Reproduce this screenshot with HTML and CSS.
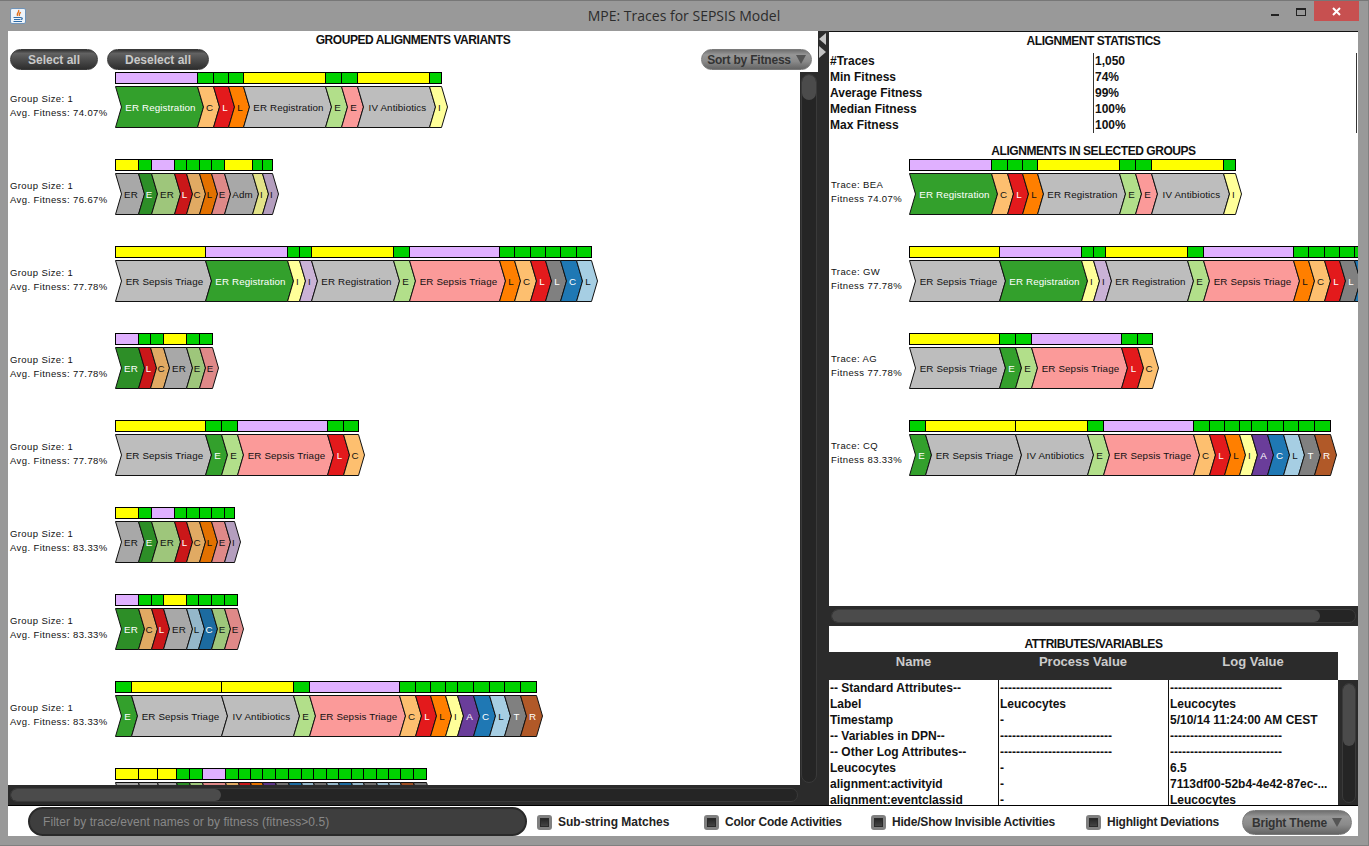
FILE: index.html
```html
<!DOCTYPE html>
<html lang="en">

<head>
  <meta charset="UTF-8">
  <title>MPE: Traces for SEPSIS Model</title>
  <link rel="stylesheet" href="styles.css">
</head>

<body>
  <div class="window">
    <div class="titlebar">
      <div class="titlebar-left">
        <svg class="app-icon" width="16" height="16" viewBox="0 0 16 16">
          <rect x="0.5" y="0.5" width="15" height="15" rx="1.5" fill="#eef4fa" stroke="#6f93b8" />
          <path d="M8.5 2 C10 4 6 5 7.5 8 M10.5 4 C10 5.5 8.5 6 9.5 8" fill="none" stroke="#e2711d" stroke-width="1.4" />
          <path d="M3.5 9.5 H10.5 M4 11.5 H10 M3.5 13.5 H12 M10.5 9.5 C13 9.5 13 11.5 10.5 11.5" fill="none" stroke="#2f6ca8" stroke-width="1.1" />
        </svg>
      </div>
      <div class="window-title">MPE: Traces for SEPSIS Model</div>
      <div class="win-controls">
        <div class="win-btn">
          <svg width="26" height="20" viewBox="0 0 26 20"><rect x="9" y="13" width="8" height="2" fill="#222" /></svg>
        </div>
        <div class="win-btn">
          <svg width="26" height="20" viewBox="0 0 26 20">
            <rect x="8.5" y="7.5" width="9" height="7" fill="none" stroke="#222" />
            <rect x="8" y="7" width="10" height="2" fill="#222" />
          </svg>
        </div>
        <div class="win-close">
          <svg width="45" height="20" viewBox="0 0 45 20">
            <path d="M19 7 L26 14 M26 7 L19 14" stroke="#fff" stroke-width="2" />
          </svg>
        </div>
      </div>
    </div>

    <div class="content">
      <div class="split">
        <div class="left-pane">
          <div class="left-head">
            <div class="panel-title">GROUPED ALIGNMENTS VARIANTS</div>
            <div class="head-buttons">
              <button class="btn-dark btn-select">Select all</button>
              <button class="btn-dark btn-deselect">Deselect all</button>
              <button class="btn-grey btn-sort">Sort by Fitness <span class="arrow"></span></button>
            </div>
          </div>
          <div class="left-body">
            <div class="variants" id="variants"></div>
            <div class="scroll-v">
              <div class="channel-v"><div class="thumb thumb-variants-v"></div></div>
            </div>
          </div>
          <div class="scroll-h scroll-variants">
            <div class="channel-h"><div class="thumb thumb-variants-h"></div></div>
          </div>
        </div>

        <div class="divider">
          <span class="tri tri-left"></span>
          <span class="tri tri-right"></span>
        </div>

        <div class="right-pane">
          <div class="right-top">
            <div class="panel-title stats-title">ALIGNMENT STATISTICS</div>
            <div class="stats">
              <div>#Traces</div><div>1,050</div>
              <div>Min Fitness</div><div>74%</div>
              <div>Average Fitness</div><div>99%</div>
              <div>Median Fitness</div><div>100%</div>
              <div>Max Fitness</div><div>100%</div>
            </div>
            <div class="panel-title selected-title">ALIGNMENTS IN SELECTED GROUPS</div>
            <div class="traces" id="traces"></div>
          </div>
          <div class="scroll-h">
            <div class="channel-h"><div class="thumb thumb-traces-h"></div></div>
          </div>
          <div class="attributes">
            <div class="panel-title attr-title">ATTRIBUTES/VARIABLES</div>
            <div class="attr-head">
              <div>Name</div>
              <div>Process Value</div>
              <div>Log Value</div>
            </div>
            <div class="attr-body">
              <div class="attr-table">
                <div>-- Standard Attributes--</div><div>----------------------------</div><div>----------------------------</div>
                <div>Label</div><div>Leucocytes</div><div>Leucocytes</div>
                <div>Timestamp</div><div>-</div><div>5/10/14 11:24:00 AM CEST</div>
                <div>-- Variables in DPN--</div><div>----------------------------</div><div>----------------------------</div>
                <div>-- Other Log Attributes--</div><div>----------------------------</div><div>----------------------------</div>
                <div>Leucocytes</div><div>-</div><div>6.5</div>
                <div>alignment:activityid</div><div>-</div><div>7113df00-52b4-4e42-87ec-...</div>
                <div>alignment:eventclassid</div><div>-</div><div>Leucocytes</div>
              </div>
              <div class="scroll-v scroll-attr">
                <div class="channel-v"><div class="thumb thumb-attr-v"></div></div>
              </div>
            </div>
          </div>
        </div>
      </div>

      <div class="toolbar">
        <div class="filter-cell">
          <input class="filter" type="text" placeholder="Filter by trace/event names or by fitness (fitness>0.5)">
        </div>
        <label class="check check-wide"><span class="box"></span>Sub-string Matches</label>
        <label class="check"><span class="box"></span>Color Code Activities</label>
        <label class="check"><span class="box"></span>Hide/Show Invisible Activities</label>
        <label class="check"><span class="box"></span>Highlight Deviations</label>
        <button class="btn-grey btn-theme">Bright Theme <span class="arrow"></span></button>
      </div>
    </div>
  </div>

  <script src="script.js"></script>
</body>

</html>
```

FILE: styles.css
```css
html,
body {
  padding: 0;
  margin: 0;
  overflow: hidden;
  font-family: "Liberation Sans", Arial, sans-serif;
}

.window {
  display: flex;
  flex-direction: column;
  width: 100vw;
  height: 100vh;
  box-sizing: border-box;
  background-color: #999;
  border-top: 1px solid #777;
  border-right: 1px solid #808080;
  border-bottom: 1px solid #808080;
}

/* title bar */
.titlebar {
  display: grid;
  grid-template-columns: 1fr auto 1fr;
  height: 30px;
  flex: none;
}

.titlebar-left {
  padding: 7px 0 0 10px;
}

.app-icon {
  display: block;
}

.window-title {
  font-family: "Open Sans", sans-serif;
  font-size: 14px;
  line-height: 30px;
  color: #2c2c2c;
}

.win-controls {
  display: flex;
  justify-content: flex-end;
  align-items: flex-start;
  padding-right: 9px;
}

.win-btn {
  width: 26px;
  height: 20px;
}

.win-close {
  width: 45px;
  height: 20px;
  background-color: #c75050;
}

.win-btn svg,
.win-close svg {
  display: block;
}

/* main area */
.content {
  display: flex;
  flex-direction: column;
  width: 1350px;
  height: 805px;
  margin-left: 8px;
  background-color: #fff;
}

.split {
  display: flex;
  height: 774px;
  flex: none;
  border-bottom: 1px solid #000;
}

.left-pane {
  display: flex;
  flex-direction: column;
  width: 810px;
  flex: none;
}

.left-head {
  height: 41px;
  flex: none;
}

.panel-title {
  font-size: 12px;
  font-weight: bold;
  line-height: 18px;
  letter-spacing: -0.45px;
  text-align: center;
  color: #111;
}

.head-buttons {
  display: flex;
  align-items: flex-start;
  gap: 9px;
  padding-left: 2px;
}

button {
  padding: 0;
  height: 21px;
  border-radius: 11px;
  font-family: inherit;
  font-size: 12px;
  font-weight: bold;
  box-sizing: border-box;
}

.btn-dark {
  color: #c9c9c9;
  border: 1px solid #3a3a3a;
  background: linear-gradient(#333 0, #626262 18%, #4a4a4a 55%, #2e2e2e 100%);
}

.btn-select {
  width: 88px;
}

.btn-deselect {
  width: 102px;
}

.btn-grey {
  display: flex;
  align-items: center;
  justify-content: center;
  gap: 4px;
  color: #333;
  letter-spacing: -0.2px;
  border: 1px solid #7a7a7a;
  background: linear-gradient(#707070 0, #969696 25%, #8a8a8a 60%, #646464 100%);
}

.btn-sort {
  width: 111px;
  margin-left: auto;
  margin-right: 6px;
}

.btn-theme {
  width: 110px;
  height: 25px;
  border-radius: 13px;
  margin-top: 3px;
}

.arrow {
  width: 0;
  height: 0;
  margin-left: 1px;
  border-left: 5px solid transparent;
  border-right: 5px solid transparent;
  border-top: 9px solid #555;
}

.left-body {
  display: flex;
  flex: 1;
  min-height: 0;
}

.variants {
  display: flex;
  flex-direction: column;
  gap: 31px;
  width: 792px;
  flex: none;
  overflow: hidden;
}

/* trace rows */
.trace-row {
  display: flex;
  flex: none;
  padding-left: 2px;
}

.trace-info {
  display: flex;
  flex-direction: column;
  justify-content: center;
  align-self: flex-end;
  flex: none;
  font-size: 9.5px;
  line-height: 14px;
  letter-spacing: 0.4px;
  color: #111;
  white-space: nowrap;
}

.variants .trace-info {
  width: 105px;
  height: 40px;
  padding-bottom: 2px;
}

.traces .trace-info {
  width: 78px;
  height: 38px;
  padding-bottom: 4px;
}

.trace-main {
  flex: none;
}

.bar {
  display: flex;
  width: fit-content;
  height: 12px;
  box-sizing: border-box;
  margin-bottom: 2px;
  border-top: 1px solid #000;
  border-bottom: 1px solid #000;
  border-right: 1px solid #000;
}

.bar-cell {
  box-sizing: border-box;
  border-left: 1px solid #000;
  flex: none;
}

.cell-m {
  background-color: #e0b0ff;
}

.cell-n {
  background-color: #00d200;
}

.cell-y {
  background-color: #ffff00;
}

.chain {
  display: block;
  overflow: visible;
}

.chain polygon {
  stroke: #111;
  stroke-width: 1;
}

.chain-dim polygon {
  filter: brightness(0.89);
}

.chain text {
  font-family: "Liberation Sans", Arial, sans-serif;
  font-size: 9.8px;
  letter-spacing: 0.12px;
  text-anchor: middle;
  fill: #111;
}

.chain text.on-dark {
  fill: #fff;
}

/* scrollbars */
.scroll-v {
  width: 18px;
  flex: none;
  box-sizing: border-box;
  padding: 2px 1px;
  background-color: #2b2b2b;
}

.channel-v {
  height: 100%;
  border-radius: 8px;
  box-sizing: border-box;
  border: 1px solid #3a3a3a;
  background-color: #252525;
}

.scroll-h {
  height: 20px;
  flex: none;
  box-sizing: border-box;
  padding: 3px 2px;
  background-color: #2b2b2b;
}

.scroll-variants {
  padding-right: 20px;
}

.channel-h {
  height: 100%;
  border-radius: 8px;
  box-sizing: border-box;
  border: 1px solid #3a3a3a;
  background-color: #252525;
}

.thumb {
  border-radius: 8px;
  background-color: #4b4b4b;
}

.thumb-variants-v {
  height: 25px;
}

.thumb-variants-h {
  width: 210px;
  height: 100%;
}

.thumb-traces-h {
  width: 488px;
  height: 100%;
}

.thumb-attr-v {
  height: 62px;
}

.divider {
  display: flex;
  flex-direction: column;
  gap: 1px;
  width: 11px;
  flex: none;
  box-sizing: border-box;
  padding: 2px 0 0 1px;
  background-color: #2b2b2b;
}

.tri {
  width: 0;
  height: 0;
  border-top: 6px solid transparent;
  border-bottom: 6px solid transparent;
}

.tri-left {
  border-right: 7px solid #c4c4c4;
}

.tri-right {
  border-left: 7px solid #c4c4c4;
}

/* right side */
.right-pane {
  display: flex;
  flex-direction: column;
  flex: 1;
  min-width: 0;
}

.right-top {
  flex: 1;
  min-height: 0;
  overflow: hidden;
  border-top: 1px solid #111;
}

.stats-title {
  margin-bottom: 3px;
}

.stats {
  display: grid;
  grid-template-columns: 264px 264px;
  font-size: 12px;
  font-weight: bold;
  line-height: 16px;
  color: #111;
}

.stats div {
  padding-left: 1px;
  white-space: nowrap;
}

.stats div:nth-child(even) {
  border-left: 1px solid #333;
  border-right: 1px solid #333;
}

.selected-title {
  line-height: 15px;
  margin-top: 11px;
}

.traces {
  display: flex;
  flex-direction: column;
  gap: 31px;
}

.attributes {
  display: flex;
  flex-direction: column;
  height: 179px;
  flex: none;
  overflow: hidden;
}

.attr-title {
  padding-top: 10px;
  line-height: 16px;
}

.attr-head {
  display: grid;
  grid-template-columns: 169px 170px 170px;
  width: 509px;
  height: 28px;
  flex: none;
  box-sizing: border-box;
  padding-top: 1px;
  background-color: #2b2b2b;
  color: #ccc;
  font-size: 13px;
  font-weight: bold;
  line-height: 18px;
  text-align: center;
}

.attr-body {
  display: flex;
  flex: 1;
  min-height: 0;
}

.attr-table {
  display: grid;
  grid-template-columns: 169px 170px 170px;
  grid-auto-rows: 16px;
  width: 509px;
  flex: none;
  font-size: 12px;
  font-weight: bold;
  line-height: 16px;
  color: #111;
}

.attr-table div {
  padding-left: 1px;
  box-sizing: border-box;
  overflow: hidden;
  white-space: nowrap;
}

.attr-table div:not(:nth-child(3n+1)) {
  border-left: 1px solid #111;
}

.scroll-attr {
  width: 20px;
  padding: 3px 2px 2px 4px;
}

/* bottom toolbar */
.toolbar {
  display: grid;
  grid-template-columns: 509px 167px 167px 215px 156px 110px;
  align-items: center;
  height: 30px;
  flex: none;
  padding-left: 20px;
}

.filter {
  display: block;
  width: 499px;
  height: 29px;
  box-sizing: border-box;
  padding: 1px 13px 0;
  border: 2px solid #2a2a2a;
  border-radius: 15px;
  background-color: #3e3e3e;
  color: #888;
  font-family: inherit;
  font-size: 12px;
  letter-spacing: 0.07px;
  outline: none;
}

.filter::placeholder {
  color: #888;
  opacity: 1;
}

.check {
  display: flex;
  align-items: center;
  gap: 6px;
  margin-top: 2px;
  font-size: 12px;
  font-weight: bold;
  letter-spacing: -0.2px;
  color: #222;
  white-space: nowrap;
}

.check-wide {
  letter-spacing: 0;
}

.box {
  width: 15px;
  height: 15px;
  flex: none;
  box-sizing: border-box;
  border: 3px solid #808080;
  border-radius: 3px;
  background: linear-gradient(#222, #484848);
  box-shadow: inset 0 0 0 1px #2a2a2a;
}
```

FILE: script.js
```js
// activity colours, the ones with a dark fill get white text
const COLOURS = {
  g: '#33a02c', s: '#bdbdbd', c: '#fdbf6f', r: '#e31a1c', o: '#ff7f00',
  l: '#b2df8a', p: '#fb9a99', y: '#ffff99', v: '#cab2d6', u: '#6a3d9a',
  b: '#1f78b4', k: '#a6cee3', d: '#808080', w: '#b15928'
};
const ON_DARK = 'grubdw';

const REG = 'ER Registration';
const TRI = 'ER Sepsis Triage';
const IVA = 'IV Antibiotics';

// [label, colour, move type, width] - move type m = model only, n = sync, y = log only
const SEQ_1 = [[REG, 'g', 'm', 82], ['C', 'c', 'n', 16], ['L', 'r', 'n', 15], ['L', 'o', 'n', 15], [REG, 's', 'y', 82], ['E', 'l', 'n', 16], ['E', 'p', 'n', 16], [IVA, 's', 'y', 72], ['I', 'y', 'n', 12]];
const SEQ_3 = [[TRI, 's', 'y', 90], [REG, 'g', 'm', 82], ['I', 'y', 'n', 12], ['I', 'v', 'n', 12], [REG, 's', 'y', 82], ['E', 'l', 'n', 16], [TRI, 'p', 'm', 90], ['L', 'o', 'n', 15], ['C', 'c', 'n', 16], ['L', 'r', 'n', 15], ['L', 'd', 'n', 15], ['C', 'b', 'n', 16], ['L', 'k', 'n', 15]];
const SEQ_5 = [[TRI, 's', 'y', 90], ['E', 'g', 'n', 16], ['E', 'l', 'n', 16], [TRI, 'p', 'm', 90], ['L', 'r', 'n', 16], ['C', 'c', 'n', 15]];
const SEQ_8 = [['E', 'g', 'n', 16], [TRI, 's', 'y', 90], [IVA, 's', 'y', 72], ['E', 'l', 'n', 16], [TRI, 'p', 'm', 90], ['C', 'c', 'n', 16], ['L', 'r', 'n', 15], ['L', 'o', 'n', 15], ['I', 'y', 'n', 12], ['A', 'u', 'n', 16], ['C', 'b', 'n', 16], ['L', 'k', 'n', 15], ['T', 'd', 'n', 16], ['R', 'w', 'n', 16]];

const VARIANTS = [
  { lines: ['Group Size: 1', 'Avg. Fitness: 74.07%'], seq: SEQ_1 },
  { lines: ['Group Size: 1', 'Avg. Fitness: 76.67%'], dim: true, seq: [['ER', 's', 'y', 23], ['E', 'g', 'n', 13], ['ER', 'l', 'm', 23], ['L', 'r', 'n', 12], ['C', 'c', 'n', 13], ['L', 'o', 'n', 12], ['E', 'p', 'n', 13], ['Adm', 's', 'y', 28], ['I', 'y', 'n', 10], ['I', 'v', 'n', 10]] },
  { lines: ['Group Size: 1', 'Avg. Fitness: 77.78%'], seq: SEQ_3 },
  { lines: ['Group Size: 1', 'Avg. Fitness: 77.78%'], dim: true, seq: [['ER', 'g', 'm', 23], ['L', 'r', 'n', 12], ['C', 'c', 'n', 13], ['ER', 's', 'y', 23], ['E', 'l', 'n', 13], ['E', 'p', 'n', 13]] },
  { lines: ['Group Size: 1', 'Avg. Fitness: 77.78%'], seq: SEQ_5 },
  { lines: ['Group Size: 1', 'Avg. Fitness: 83.33%'], dim: true, seq: [['ER', 's', 'y', 23], ['E', 'g', 'n', 13], ['ER', 'l', 'm', 23], ['L', 'r', 'n', 12], ['C', 'c', 'n', 13], ['L', 'o', 'n', 12], ['E', 'p', 'n', 13], ['I', 'v', 'n', 10]] },
  { lines: ['Group Size: 1', 'Avg. Fitness: 83.33%'], dim: true, seq: [['ER', 'g', 'm', 23], ['C', 'c', 'n', 13], ['L', 'r', 'n', 12], ['ER', 's', 'y', 23], ['L', 'k', 'n', 12], ['C', 'b', 'n', 13], ['E', 'l', 'n', 13], ['E', 'p', 'n', 13]] },
  { lines: ['Group Size: 1', 'Avg. Fitness: 83.33%'], seq: SEQ_8 },
  // scrolled under the bottom edge, only the top of it shows
  { lines: [], dim: true, seq: [['', 's', 'y', 23], ['', 's', 'y', 19], ['', 's', 'y', 19], ['', 'g', 'n', 13], ['', 'l', 'n', 13], ['', 'p', 'm', 23], ['', 'c', 'n', 13], ['', 'r', 'n', 12], ['', 'o', 'n', 12], ['', 'u', 'n', 13], ['', 'd', 'n', 13], ['', 'b', 'n', 13], ['', 'k', 'n', 12], ['', 'd', 'n', 13], ['', 'k', 'n', 12], ['', 'b', 'n', 13], ['', 'k', 'n', 12], ['', 'd', 'n', 13], ['', 'k', 'n', 12], ['', 'k', 'n', 12], ['', 'w', 'n', 13], ['', 'd', 'n', 13]] }
];

const TRACES = [
  { lines: ['Trace: BEA', 'Fitness 74.07%'], seq: SEQ_1 },
  { lines: ['Trace: GW', 'Fitness 77.78%'], seq: SEQ_3 },
  { lines: ['Trace: AG', 'Fitness 77.78%'], seq: SEQ_5 },
  { lines: ['Trace: CQ', 'Fitness 83.33%'], seq: SEQ_8 }
];

const NOTCH = 6;
const SVG_NS = 'http://www.w3.org/2000/svg';

function buildBar(seq) {
  const bar = document.createElement('div');
  bar.className = 'bar';
  seq.forEach(step => {
    const cell = document.createElement('div');
    cell.className = 'bar-cell cell-' + step[2];
    cell.style.width = step[3] + 'px';
    bar.appendChild(cell);
  });
  return bar;
}

function buildChain(seq, dim) {
  const total = seq.reduce((sum, step) => sum + step[3], 0);
  const svg = document.createElementNS(SVG_NS, 'svg');
  svg.setAttribute('class', dim ? 'chain chain-dim' : 'chain');
  svg.setAttribute('width', total + NOTCH + 1);
  svg.setAttribute('height', 42);

  let x = 0.5;
  seq.forEach(step => {
    const w = step[3];
    const poly = document.createElementNS(SVG_NS, 'polygon');
    poly.setAttribute('points', [
      x + ',0.5', (x + w) + ',0.5', (x + w + NOTCH) + ',21',
      (x + w) + ',41.5', x + ',41.5', (x + NOTCH) + ',21'
    ].join(' '));
    poly.setAttribute('fill', COLOURS[step[1]]);
    svg.appendChild(poly);

    if (step[0]) {
      const label = document.createElementNS(SVG_NS, 'text');
      label.setAttribute('x', x + w / 2 + 4);
      label.setAttribute('y', 24.5);
      if (ON_DARK.includes(step[1])) {
        label.setAttribute('class', 'on-dark');
      }
      label.textContent = step[0];
      svg.appendChild(label);
    }

    x += w;
  });
  return svg;
}

function buildRow(item) {
  const row = document.createElement('div');
  row.className = 'trace-row';

  const info = document.createElement('div');
  info.className = 'trace-info';
  item.lines.forEach(line => {
    const div = document.createElement('div');
    div.textContent = line;
    info.appendChild(div);
  });
  row.appendChild(info);

  const main = document.createElement('div');
  main.className = 'trace-main';
  main.appendChild(buildBar(item.seq));
  main.appendChild(buildChain(item.seq, item.dim));
  row.appendChild(main);
  return row;
}

const variantsEl = document.getElementById('variants');
VARIANTS.forEach(v => variantsEl.appendChild(buildRow(v)));

const tracesEl = document.getElementById('traces');
TRACES.forEach(t => tracesEl.appendChild(buildRow(t)));
```
